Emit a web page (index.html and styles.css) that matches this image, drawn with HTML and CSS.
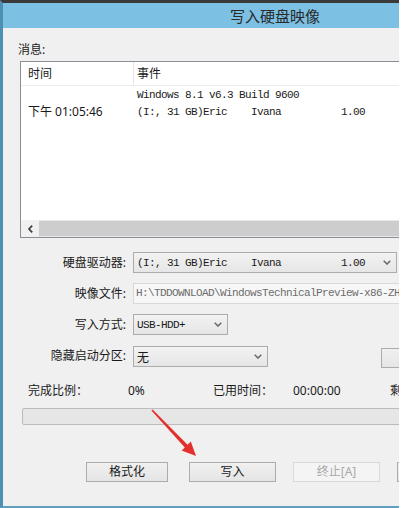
FILE: index.html
```html
<!DOCTYPE html>
<html lang="zh-CN">
<head>
  <meta charset="UTF-8">
  <title>写入硬盘映像</title>
  <link rel="stylesheet" href="styles.css">
</head>
<body>

<div class="window">
  <div class="titlebar"><span class="title">写入硬盘映像</span></div>

  <div class="content">
    <div class="msg-label">消息:</div>

    <div class="listview">
      <div class="lv-head">
        <div class="col-time">时间</div>
        <div class="col-event">事件</div>
      </div>
      <div class="lv-rows">
        <div class="lv-row">
          <span class="cell-time"></span>
          <span class="cell-event mono">Windows 8.1 v6.3 Build 9600</span>
        </div>
        <div class="lv-row">
          <span class="cell-time">下午 01:05:46</span>
          <span class="cell-event mono">(I:, 31 GB)Eric    Ivana          1.00</span>
        </div>
      </div>
      <div class="hscroll">
        <div class="sb-arrow">
          <svg width="5" height="8" viewBox="0 0 5 8"><path d="M4.2 0.6 L1 4 L4.2 7.4" fill="none" stroke="#444" stroke-width="1.8"/></svg>
        </div>
        <div class="sb-thumb"></div>
      </div>
    </div>

    <div class="form">
      <div class="label">硬盘驱动器:</div>
      <div class="field">
        <div class="combo combo-drive">
          <span class="mono">(I:, 31 GB)Eric    Ivana          1.00</span>
          <svg class="chev" width="8" height="5" viewBox="0 0 8 5"><path d="M0.7 0.7 L4 4 L7.3 0.7" fill="none" stroke="#666" stroke-width="1.5"/></svg>
        </div>
      </div>

      <div class="label">映像文件:</div>
      <div class="field">
        <div class="edit mono">H:\TDDOWNLOAD\WindowsTechnicalPreview-x86-ZH</div>
      </div>

      <div class="label">写入方式:</div>
      <div class="field">
        <div class="combo combo-mode">
          <span class="mono">USB-HDD+</span>
          <svg class="chev" width="8" height="5" viewBox="0 0 8 5"><path d="M0.7 0.7 L4 4 L7.3 0.7" fill="none" stroke="#666" stroke-width="1.5"/></svg>
        </div>
      </div>

      <div class="label">隐藏启动分区:</div>
      <div class="field field-last">
        <div class="combo combo-hide">
          <span>无</span>
          <svg class="chev" width="8" height="5" viewBox="0 0 8 5"><path d="M0.7 0.7 L4 4 L7.3 0.7" fill="none" stroke="#666" stroke-width="1.5"/></svg>
        </div>
        <div class="btn btn-side"></div>
      </div>
    </div>

    <div class="progress-info">
      <span>完成比例：</span>
      <span>0%</span>
      <span>已用时间：</span>
      <span>00:00:00</span>
      <span>剩</span>
    </div>
    <div class="progress"></div>

    <div class="buttons">
      <div class="btn btn-format">格式化</div>
      <div class="btn btn-write">写入</div>
      <div class="btn btn-stop disabled">终止[A]</div>
      <div class="btn btn-back"></div>
    </div>
  </div>

  <svg class="arrow" width="399" height="508" viewBox="0 0 399 508">
    <polygon points="151.4,410.6 152.6,409.4 187.6,444.8 190.8,441.6 196,456 181.6,450.6 184.8,447.4" fill="#e3302c"/>
  </svg>
</div>

</body>
</html>
```

FILE: styles.css
```css
* {
  box-sizing: border-box;
  margin: 0;
  padding: 0;
}

body {
  background: #ffffff;
  font-family: "Noto Sans", "Noto Sans CJK SC", sans-serif;
  font-size: 12px;
  color: #1a1a1a;
}

.window {
  position: relative;
  width: 399px;
  height: 508px;
  border-left: 3px solid #4f8fb0;
  border-top: 3px solid #3a3a3a;
  border-bottom: 2px solid #5f9fc0;
  overflow: hidden;
  display: flex;
  flex-direction: column;
}

.titlebar {
  height: 25px;
  background: #7cc0e3;
  display: flex;
  align-items: center;
  padding-left: 227px;
  flex-shrink: 0;
}

.title {
  font-family: "Noto Sans CJK SC", sans-serif;
  font-size: 15px;
  color: #2a2a2a;
  line-height: 18px;
}

.content {
  flex: 1;
  background: #f0f0f0;
  overflow: hidden;
  display: flex;
  flex-direction: column;
}

.mono {
  font-family: "Liberation Mono", monospace;
  font-size: 11px;
  letter-spacing: -0.6px;
  white-space: pre;
}

.msg-label {
  margin: 15px 0 0 15px;
  line-height: 14px;
}

/* list view */
.listview {
  margin: 4px 0 0 17px;
  width: 392px;
  height: 177px;
  border: 1px solid #8a8e96;
  background: #ffffff;
  display: flex;
  flex-direction: column;
}

.lv-head {
  height: 24px;
  display: flex;
  border-bottom: 1px solid #ececec;
}

.lv-head div {
  display: flex;
  align-items: center;
  line-height: 14px;
}

.col-time {
  width: 113px;
  padding-left: 7px;
  border-right: 1px solid #e5e5e5;
}

.col-event {
  padding-left: 3px;
}

.lv-rows {
  flex: 1;
  padding-top: 1px;
}

.lv-row {
  height: 16px;
  display: flex;
  align-items: center;
}

.lv-row + .lv-row {
  margin-top: 1px;
}

.cell-time {
  width: 116px;
  padding-left: 7px;
  line-height: 14px;
}

.hscroll {
  height: 17px;
  display: flex;
  background: #e8e8e8;
}

.sb-arrow {
  width: 18px;
  display: flex;
  align-items: center;
  justify-content: center;
  background: #f0f0f0;
}

.sb-thumb {
  flex: 1;
  margin: 1px 0;
  background: #cdcdcd;
}

/* form */
.form {
  margin-top: 14px;
  display: grid;
  grid-template-columns: 123px auto;
  column-gap: 7px;
  row-gap: 10px;
}

.label {
  text-align: right;
  line-height: 21px;
  height: 21px;
}

.field {
  height: 21px;
  display: flex;
  align-items: flex-start;
}

.field-last {
  margin-top: 1px;
}

.combo {
  height: 21px;
  border: 1px solid #acacac;
  background: linear-gradient(#f2f2f2, #e6e6e6);
  display: flex;
  align-items: center;
  justify-content: space-between;
  padding: 0 5px 0 3px;
}

.combo-drive {
  width: 264px;
}

.combo-mode {
  width: 95px;
}

.combo-hide {
  width: 135px;
}

.edit {
  width: 280px;
  height: 21px;
  border: 1px solid #d9d9d9;
  background: #f7f7f7;
  color: #6d6d6d;
  padding-left: 2px;
  line-height: 19px;
  overflow: hidden;
}

.btn-side {
  margin-left: 113px;
  margin-top: 2px;
  width: 70px;
  height: 22px;
}

/* progress */
.progress-info {
  margin: 17px 0 0 25px;
  display: grid;
  grid-template-columns: 100px 85px 80px 97px 12px;
  line-height: 14px;
  white-space: nowrap;
}

.progress {
  margin: 10px 0 0 19px;
  width: 390px;
  height: 17px;
  border: 1px solid #bcbcbc;
  border-radius: 2px;
  background: #e6e6e6;
}

/* buttons */
.buttons {
  margin: 37px 0 0 83px;
  display: flex;
}

.btn {
  height: 20px;
  border: 1px solid #acacac;
  background: linear-gradient(#f0f0f0, #e5e5e5);
  display: flex;
  align-items: center;
  justify-content: center;
  line-height: 14px;
  flex-shrink: 0;
}

.btn-format {
  width: 82px;
}

.btn-write {
  width: 87px;
  margin-left: 21px;
}

.btn-stop {
  width: 87px;
  margin-left: 17px;
}

.btn-back {
  width: 87px;
  margin-left: 17px;
}

.btn.disabled {
  border-color: #d9d9d9;
  background: #f4f4f4;
  color: #a8a8a8;
}

.arrow {
  position: absolute;
  left: -3px;
  top: -3px;
  pointer-events: none;
}
```
